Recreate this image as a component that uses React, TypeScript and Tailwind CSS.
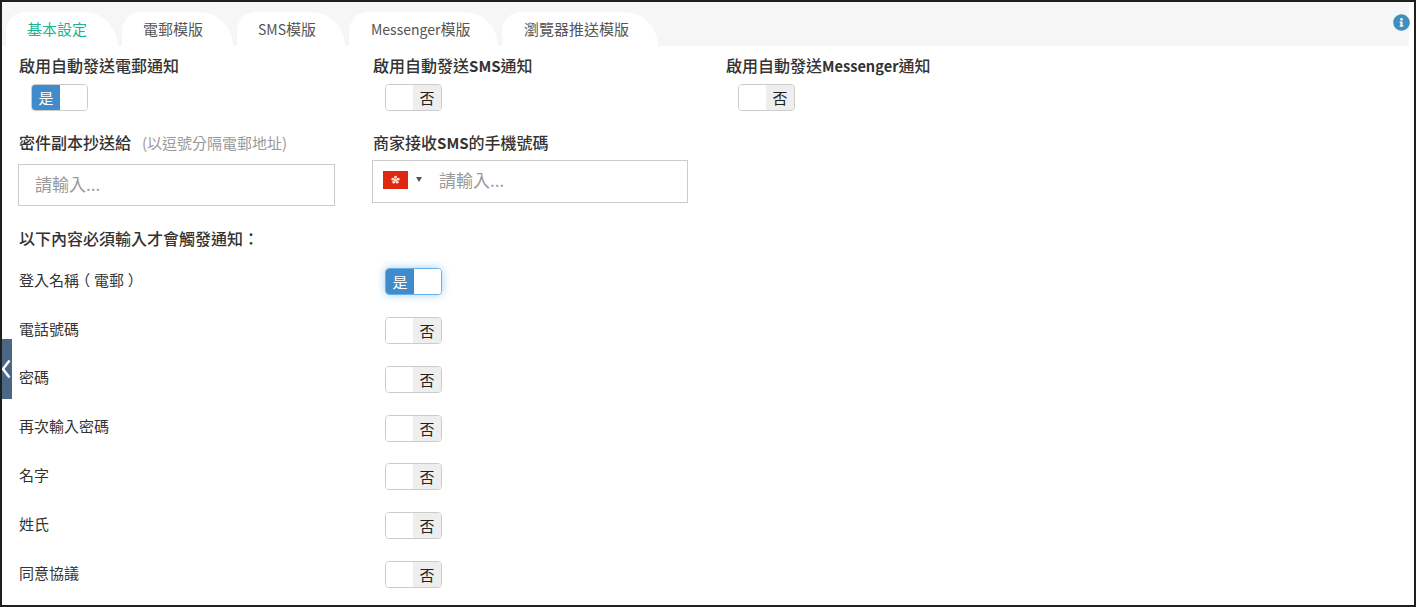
import { FaInfoCircle } from "react-icons/fa";

const FONT = "font-['Noto_Sans_CJK_TC','Noto_Sans',sans-serif]";
const HEADING = "h-[26px] text-[16px] font-medium leading-[26px] text-[#333333]";

const TABS = [
  { cjk: "基本設定", width: "w-[112px]", pad: "pl-[21px]", active: true },
  { cjk: "電郵模版", width: "w-[111px]", pad: "pl-[21px]" },
  { latin: "SMS", cjk: "模版", width: "w-[108px]", pad: "pl-[21px]" },
  { latin: "Messenger", cjk: "模版", width: "w-[149px]", pad: "pl-[22px]" },
  { cjk: "瀏覽器推送模版", width: "w-[156px]", pad: "pl-[22px]" },
];

const REQUIRED_FIELDS = [
  { label: "電話號碼" },
  { label: "密碼" },
  { label: "再次輸入密碼" },
  { label: "名字" },
  { label: "姓氏" },
  { label: "同意協議" },
];

function Toggle({ on = false, focused = false }: { on?: boolean; focused?: boolean }) {
  return (
    <div
      className={`flex h-[27px] w-[57px] overflow-hidden rounded-[4px] border text-[15px] leading-[25px] ${
        focused
          ? "border-[#66afe9] shadow-[0_0_8px_rgba(102,175,233,0.6)]"
          : "border-[#cccccc]"
      }`}
    >
      {on ? (
        <>
          <span className="w-[28px] bg-[#428bca] text-center text-white">是</span>
          <span className="flex-1 bg-white" />
        </>
      ) : (
        <>
          <span className="w-[27px] bg-white" />
          <span className="flex-1 bg-[#eeeeee] text-center text-[#222222]">否</span>
        </>
      )}
    </div>
  );
}

function HkFlag() {
  return (
    <svg width="25" height="18" viewBox="0 0 25 18">
      <rect width="25" height="18" fill="#de2910" />
      <g fill="#ffdcd6">
        <circle cx="12.5" cy="6.2" r="1.4" />
        <circle cx="15.2" cy="8.2" r="1.4" />
        <circle cx="14.2" cy="11.2" r="1.4" />
        <circle cx="10.8" cy="11.2" r="1.4" />
        <circle cx="9.8" cy="8.2" r="1.4" />
        <circle cx="12.5" cy="9" r="1.6" />
      </g>
    </svg>
  );
}

function Paren({ children }: { children: string }) {
  return (
    <span className="inline-block w-[15px] text-center [font-feature-settings:'halt']">{children}</span>
  );
}

function FieldRow({ label, children }: { label: React.ReactNode; children: React.ReactNode }) {
  return (
    <div className="flex h-[48.88px] items-center">
      <div className="w-[366px] pb-[3px] text-[15px] text-[#333333]">{label}</div>
      {children}
    </div>
  );
}

export default function App() {
  return (
    <div
      className={`relative flex h-[607px] w-[1416px] flex-col overflow-hidden border-2 border-[#1f1f1f] bg-white ${FONT}`}
    >
      {/* Tabs */}
      <div className="mr-[5px] flex h-[44px] shrink-0 items-end gap-[4px] bg-[#f6f6f6] pl-[4px]">
        {TABS.map((tab) => (
          <div
            key={tab.cjk + tab.latin}
            className={`h-[34px] ${tab.width} ${tab.pad} rounded-tl-[20px] rounded-tr-[36px] bg-white text-[15px] leading-[33px] ${
              tab.active ? "text-[#1ab394]" : "text-[#555555]"
            }`}
          >
            {tab.latin && <span className="text-[14px]">{tab.latin}</span>}
            {tab.cjk}
          </div>
        ))}
      </div>
      <FaInfoCircle className="absolute right-[4px] top-[12px] text-[17px] text-[#3f8fbd]" />

      {/* Side handle */}
      <div className="absolute left-0 top-[337px] flex h-[60px] w-[10px] items-center bg-[#4a6785]">
        <svg width="10" height="20" viewBox="0 0 10 20" fill="none">
          <path d="M7.5 1.5L1 10L7.5 18.5" stroke="white" strokeWidth="2.4" />
        </svg>
      </div>

      <div className="flex flex-col pl-[17px]">
        {/* Auto notifications */}
        <div className="mt-[6px] grid grid-cols-[354px_353px_354px]">
          <div>
            <div className={HEADING}>啟用自動發送電郵通知</div>
            <div className="mt-[6px] pl-[12px]">
              <Toggle on />
            </div>
          </div>
          <div>
            <div className={HEADING}>
              啟用自動發送<span className="text-[15px] font-bold">SMS</span>通知
            </div>
            <div className="mt-[6px] pl-[12px]">
              <Toggle />
            </div>
          </div>
          <div>
            <div className={HEADING}>
              啟用自動發送<span className="text-[14.6px] font-bold">Messenger</span>通知
            </div>
            <div className="mt-[6px] pl-[12px]">
              <Toggle />
            </div>
          </div>
        </div>

        {/* Inputs */}
        <div className="mt-[18px] grid grid-cols-[354px_353px_354px]">
          <div>
            <div className={HEADING}>
              密件副本抄送給
              <span className="ml-[11px] text-[15px] font-normal text-[#999999]">(以逗號分隔電郵地址)</span>
            </div>
            <div className="-ml-px mt-[9px] h-[42px] w-[317px] border border-[#cccccc] pl-[16px] text-[17px] leading-[38px] text-[#999999]">
              請輸入...
            </div>
          </div>
          <div>
            <div className={HEADING}>
              商家接收<span className="text-[15px] font-bold">SMS</span>的手機號碼
            </div>
            <div className="-ml-px mt-[5px] flex h-[43px] w-[316px] items-center border border-[#cccccc] pb-[4px] pl-[10px] text-[17px] text-[#999999]">
              <HkFlag />
              <span className="ml-[8px] h-0 w-0 border-x-[3px] border-t-[5px] border-x-transparent border-t-[#555555]" />
              <span className="ml-[17px]">請輸入...</span>
            </div>
          </div>
        </div>

        <div className={`mt-[19px] ${HEADING}`}>以下內容必須輸入才會觸發通知：</div>

        {/* Required fields */}
        <div className="mt-[6px] flex flex-col">
          <FieldRow
            label={
              <>
                登入名稱<Paren>（</Paren>電郵<Paren>）</Paren>
              </>
            }
          >
            <Toggle on focused />
          </FieldRow>
          {REQUIRED_FIELDS.map((field) => (
            <FieldRow key={field.label} label={field.label}>
              <Toggle />
            </FieldRow>
          ))}
        </div>
      </div>
    </div>
  );
}
